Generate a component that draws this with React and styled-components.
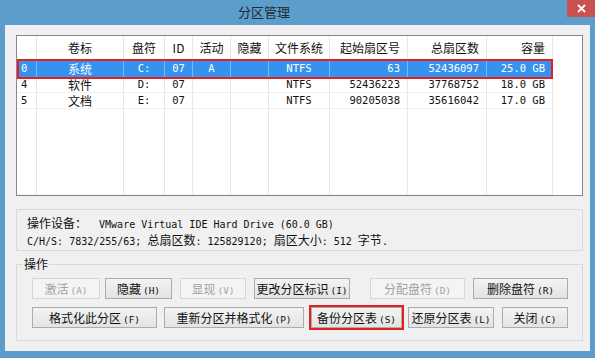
import styled, { createGlobalStyle } from 'styled-components';

const GlobalStyle = createGlobalStyle`
  html, body {
    margin: 0;
    padding: 0;
  }
  body {
    width: 595px;
    height: 358px;
    overflow: hidden;
    font-family: "Noto Sans CJK SC", sans-serif;
    font-size: 12px;
    color: #111;
  }
`;

const Frame = styled.div`
  width: 595px;
  height: 358px;
  box-sizing: border-box;
  background: #5d9dcb;
  padding: 0 5px 7px;
  display: flex;
  flex-direction: column;
`;

const TitleBar = styled.div`
  height: 25px;
  margin: 0 -5px;
  display: flex;
  align-items: flex-start;
`;

const Title = styled.div`
  margin-left: 238px;
  font-size: 13px;
  line-height: 24px;
  color: #1e2b36;
`;

const CloseButton = styled.div`
  margin-left: auto;
  width: 28px;
  height: 17px;
  background: #c9514f;
  display: flex;
  align-items: center;
  justify-content: center;
`;

const Client = styled.div`
  flex: 1;
  background: #f0f0f0;
  padding: 10px 7px 0 11px;
  display: flex;
  flex-direction: column;
`;

const ListBox = styled.div`
  height: 161px;
  box-sizing: border-box;
  border: 1px solid #828790;
  background: #fff;
  display: flex;
  flex-direction: column;
  position: relative;
  overflow: hidden;
`;

const Row = styled.div`
  display: flex;
  height: ${(p) => p.$h}px;
  flex: ${(p) => (p.$fill ? 1 : 'none')};
  width: 536px;
  background: ${(p) => (p.$selected ? '#3593ef' : 'transparent')};
  color: ${(p) => (p.$selected ? '#fff' : '#111')};
`;

const Cell = styled.div`
  width: ${(p) => p.$w}px;
  box-sizing: border-box;
  flex: none;
  border-right: 1px solid ${(p) => (p.$selected ? '#7cb8f4' : '#e8e8e8')};
  border-bottom: 1px solid ${(p) => (p.$selected ? '#3593ef' : p.$head ? '#e8e8e8' : '#f1f1f1')};
  text-align: ${(p) => p.$align};
  padding: ${(p) => (p.$align === 'right' ? '0 7px 0 0' : p.$align === 'left' ? '0 0 0 4px' : '0')};
  font-family: ${(p) =>
    p.$mono ? '"DejaVu Sans Mono", "Noto Sans CJK SC", monospace' : '"Noto Sans CJK SC", sans-serif'};
  font-size: ${(p) => (p.$mono ? '10.5px' : '12px')};
  line-height: ${(p) => p.$h - 1}px;
  white-space: nowrap;
  overflow: hidden;
`;

const SelectMark = styled.div`
  position: absolute;
  left: 0;
  top: 23px;
  width: 536px;
  height: 20px;
  box-sizing: border-box;
  border: 2px solid #e3201f;
  pointer-events: none;
`;

const InfoBox = styled.div`
  margin-top: 13px;
  height: 42px;
  box-sizing: border-box;
  border: 1px solid #dadada;
  padding: 5px 10px 0;
  line-height: 15px;
`;

const InfoLine = styled.div`
  white-space: pre;
`;

const Mono = styled.span`
  font-family: "DejaVu Sans Mono", monospace;
  font-size: 10px;
`;

const Group = styled.fieldset`
  margin: 6px 0 0;
  padding: 7px 14px 12px 15px;
  border: 1px solid #dadada;
  display: flex;
  flex-direction: column;
  gap: 8px;
`;

const Legend = styled.legend`
  margin-left: -9px;
  padding: 0 1px;
  line-height: 14px;
  font-size: 12px;
`;

const ButtonRow = styled.div`
  display: flex;
`;

const Btn = styled.button`
  width: ${(p) => p.$w}px;
  margin-left: ${(p) => p.$ml}px;
  height: 21px;
  box-sizing: border-box;
  padding: 0;
  border: 1px solid #acacac;
  background: linear-gradient(#f3f3f3, #e3e3e3);
  font-family: "Noto Sans CJK SC", sans-serif;
  font-size: 12px;
  line-height: 19px;
  color: #111;
  outline: ${(p) => (p.$marked ? '2px solid #e3201f' : 'none')};

  &:disabled {
    border-color: #d6d6d6;
    background: #f4f4f4;
    color: #a2a2a2;
  }
`;

const Key = styled.span`
  font-family: "DejaVu Sans Mono", monospace;
  font-size: 9.5px;
  margin-left: 2px;
`;

const columns = [
  { w: 20, align: 'left', mono: true, head: '' },
  { w: 87, align: 'center', mono: false, head: '卷标' },
  { w: 41, align: 'center', mono: true, head: '盘符' },
  { w: 28, align: 'center', mono: true, head: 'ID' },
  { w: 38, align: 'center', mono: true, head: '活动' },
  { w: 38, align: 'center', mono: true, head: '隐藏' },
  { w: 61, align: 'center', mono: true, head: '文件系统' },
  { w: 78, align: 'right', mono: true, head: '起始扇区号' },
  { w: 79, align: 'right', mono: true, head: '总扇区数' },
  { w: 66, align: 'right', mono: true, head: '容量' },
];

const partitions = [
  ['0', '系统', 'C:', '07', 'A', '', 'NTFS', '63', '52436097', '25.0 GB'],
  ['4', '软件', 'D:', '07', '', '', 'NTFS', '52436223', '37768752', '18.0 GB'],
  ['5', '文档', 'E:', '07', '', '', 'NTFS', '90205038', '35616042', '17.0 GB'],
];

const topButtons = [
  { label: '激活', key: '(A)', w: 68, ml: 0, disabled: true },
  { label: '隐藏', key: '(H)', w: 67, ml: 5 },
  { label: '显现', key: '(V)', w: 66, ml: 8, disabled: true },
  { label: '更改分区标识', key: '(I)', w: 96, ml: 8 },
  { label: '分配盘符', key: '(D)', w: 95, ml: 20, disabled: true },
  { label: '删除盘符', key: '(R)', w: 95, ml: 8 },
];

const bottomButtons = [
  { label: '格式化此分区', key: '(F)', w: 125, ml: 0 },
  { label: '重新分区并格式化', key: '(P)', w: 140, ml: 7 },
  { label: '备份分区表', key: '(S)', w: 91, ml: 7, marked: true },
  { label: '还原分区表', key: '(L)', w: 86, ml: 6 },
  { label: '关闭', key: '(C)', w: 66, ml: 8 },
];

const ButtonLine = ({ items }) => (
  <ButtonRow>
    {items.map((b) => (
      <Btn key={b.label} $w={b.w} $ml={b.ml} $marked={b.marked} disabled={b.disabled}>
        {b.label}
        <Key>{b.key}</Key>
      </Btn>
    ))}
  </ButtonRow>
);

export default function App() {
  return (
    <>
      <GlobalStyle />
      <Frame>
        <TitleBar>
          <Title>分区管理</Title>
          <CloseButton>
            <svg width="9" height="9" viewBox="0 0 9 9">
              <path d="M1 1L8 8M8 1L1 8" stroke="#fff" strokeWidth="1.8" />
            </svg>
          </CloseButton>
        </TitleBar>
        <Client>
          <ListBox>
            <Row $h={25}>
              {columns.map((c, i) => (
                <Cell key={i} $w={c.w} $align={c.align} $h={25} $head>
                  {c.head}
                </Cell>
              ))}
            </Row>
            {partitions.map((p, r) => (
              <Row key={r} $h={16} $selected={r === 0}>
                {columns.map((c, i) => (
                  <Cell key={i} $w={c.w} $align={c.align} $mono={c.mono} $h={16} $selected={r === 0}>
                    {p[i]}
                  </Cell>
                ))}
              </Row>
            ))}
            <Row $h={16} $fill>
              {columns.map((c, i) => (
                <Cell key={i} $w={c.w} $align={c.align} $h={16} />
              ))}
            </Row>
            <SelectMark />
          </ListBox>
          <InfoBox>
            <InfoLine>
              操作设备：<Mono>  VMware Virtual IDE Hard Drive (60.0 GB)</Mono>
            </InfoLine>
            <InfoLine>
              <Mono>C/H/S: 7832/255/63; </Mono>总扇区数<Mono>: 125829120; </Mono>扇区大小
              <Mono>: 512 </Mono>字节<Mono>.</Mono>
            </InfoLine>
          </InfoBox>
          <Group>
            <Legend>操作</Legend>
            <ButtonLine items={topButtons} />
            <ButtonLine items={bottomButtons} />
          </Group>
        </Client>
      </Frame>
    </>
  );
}
